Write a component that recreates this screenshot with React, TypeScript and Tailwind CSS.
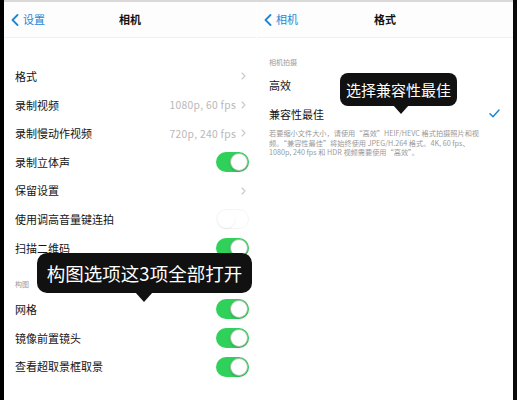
import React from "react";

const FONT = { fontFamily: '"Noto Sans CJK SC", "Noto Sans", sans-serif' };

function Chevron() {
  return (
    <svg width="5" height="8" viewBox="0 0 5 8" className="ml-[5px]">
      <polyline points="1,1 4,4 1,7" fill="none" stroke="#c8c8cc" strokeWidth="1.1" strokeLinecap="round" strokeLinejoin="round" />
    </svg>
  );
}

function BackChevron() {
  return (
    <svg width="8" height="12" viewBox="0 0 8 12">
      <polyline points="6.5,1 1.5,6 6.5,11" fill="none" stroke="#1f86d3" strokeWidth="1.8" strokeLinecap="round" strokeLinejoin="round" />
    </svg>
  );
}

function Toggle({ on }: { on: boolean }) {
  if (on) {
    return (
      <div className="w-[33px] h-[20px] rounded-full bg-[#2fd15a] flex items-center justify-end pr-[1px]">
        <div className="w-[18px] h-[18px] rounded-full bg-white border border-[#a8bfac] shadow-[0_1px_2px_rgba(0,0,0,0.2)]" />
      </div>
    );
  }
  return (
    <div className="w-[33px] h-[20px] rounded-full bg-white border border-[#f6f6f6] flex items-center pl-[1px]">
      <div className="w-[17px] h-[17px] rounded-full bg-white shadow-[0_1px_2px_rgba(0,0,0,0.08)]" />
    </div>
  );
}

function Row({ label, value, chevron, toggle }: { label: string; value?: string; chevron?: boolean; toggle?: boolean | undefined }) {
  return (
    <div className="h-[28.6px] flex items-center pl-[11px] pr-[7px]">
      <span className="text-[11px] text-[#141414] flex-1">{label}</span>
      {value && <span className="text-[10.3px] text-[#b8b8b8] tracking-[0.3px]">{value}</span>}
      {chevron && <div className="pr-[3px] flex items-center"><Chevron /></div>}
      {toggle !== undefined && <Toggle on={toggle} />}
    </div>
  );
}

function Nav({ back, title }: { back: string; title: string }) {
  return (
    <div className="h-[36px] flex items-center relative border-b border-[#f0f0f0] bg-[#fdfdfd]">
      <div className="flex items-center gap-[4px] pl-[7px] text-[11px] text-[#1f86d3]">
        <BackChevron />
        <span>{back}</span>
      </div>
      <div className="absolute inset-0 flex items-center justify-center pointer-events-none">
        <span className="text-[11px] font-bold text-[#111]">{title}</span>
      </div>
    </div>
  );
}

export default function App() {
  return (
    <div style={FONT} className="w-[517px] h-[400px] bg-black flex relative overflow-hidden">
      <div className="w-[4px] bg-black" />
      <div className="flex-1 flex flex-col bg-white">
        <div className="h-[2px] bg-[#d9d9d9]" />
        <div className="flex flex-1">
          {/* Left panel */}
          <div className="w-[252px] flex flex-col bg-white">
            <Nav back="设置" title="相机" />
            <div className="h-[24px]" />
            <Row label="格式" chevron />
            <Row label="录制视频" value="1080p, 60 fps" chevron />
            <Row label="录制慢动作视频" value="720p, 240 fps" chevron />
            <Row label="录制立体声" toggle={true} />
            <Row label="保留设置" chevron />
            <Row label="使用调高音量键连拍" toggle={false} />
            <Row label="扫描二维码" toggle={true} />
            <div className="h-[33px] flex items-end pl-[11px] pb-[6px]">
              <span className="text-[7px] text-[#9a9a9a] leading-[9px]">构图</span>
            </div>
            <Row label="网格" toggle={true} />
            <Row label="镜像前置镜头" toggle={true} />
            <Row label="查看超取景框取景" toggle={true} />
          </div>
          <div className="w-[1px] bg-white" />
          {/* Right panel */}
          <div className="flex-1 flex flex-col bg-white">
            <Nav back="相机" title="格式" />
            <div className="h-[33px] flex items-center pl-[12px] pt-[15px]">
              <span className="text-[7px] text-[#9a9a9a] leading-[9px]">相机拍摄</span>
            </div>
            <div className="h-[28.6px] flex items-center pl-[12px]">
              <span className="text-[11px] text-[#141414]">高效</span>
            </div>
            <div className="h-[28.6px] flex items-center pl-[12px] pr-[13px]">
              <span className="text-[11px] text-[#141414] flex-1">兼容性最佳</span>
              <svg width="11" height="9" viewBox="0 0 11 9">
                <polyline points="1,4.8 4,7.8 10,1" fill="none" stroke="#1f86d3" strokeWidth="1.5" strokeLinecap="round" strokeLinejoin="round" />
              </svg>
            </div>
            <div className="pl-[12px] pt-[1px] text-[7.2px] leading-[9.5px] text-[#9a9a9a] whitespace-nowrap flex flex-col">
              <span className="block">若要缩小文件大小，请使用“高效”HEIF/HEVC 格式拍摄照片和视</span>
              <span className="block">频。“兼容性最佳”将始终使用 JPEG/H.264 格式。4K, 60 fps、</span>
              <span className="block">1080p, 240 fps 和 HDR 视频需要使用“高效”。</span>
            </div>
          </div>
        </div>
      </div>
      <div className="w-[4px] bg-[#0a0a0a]" />

      {/* Tooltip 1 */}
      <div className="absolute left-[37px] top-[253px] w-[215px] h-[40px] rounded-[10px] bg-[#111111] flex items-center justify-center">
        <span className="text-[18.5px] text-white leading-none">构图选项这3项全部打开</span>
      </div>
      <svg className="absolute left-[135px] top-[292px]" width="18" height="11" viewBox="0 0 18 11">
        <polygon points="0,0 18,0 9,10" fill="#111111" />
      </svg>

      {/* Tooltip 2 */}
      <div className="absolute left-[340px] top-[73px] w-[117px] h-[33px] rounded-[8px] bg-[#111111] flex items-center justify-center">
        <span className="text-[15px] text-white leading-none">选择兼容性最佳</span>
      </div>
      <svg className="absolute left-[393px] top-[105px]" width="16" height="10" viewBox="0 0 16 10">
        <polygon points="0,0 16,0 8,9" fill="#111111" />
      </svg>
    </div>
  );
}
